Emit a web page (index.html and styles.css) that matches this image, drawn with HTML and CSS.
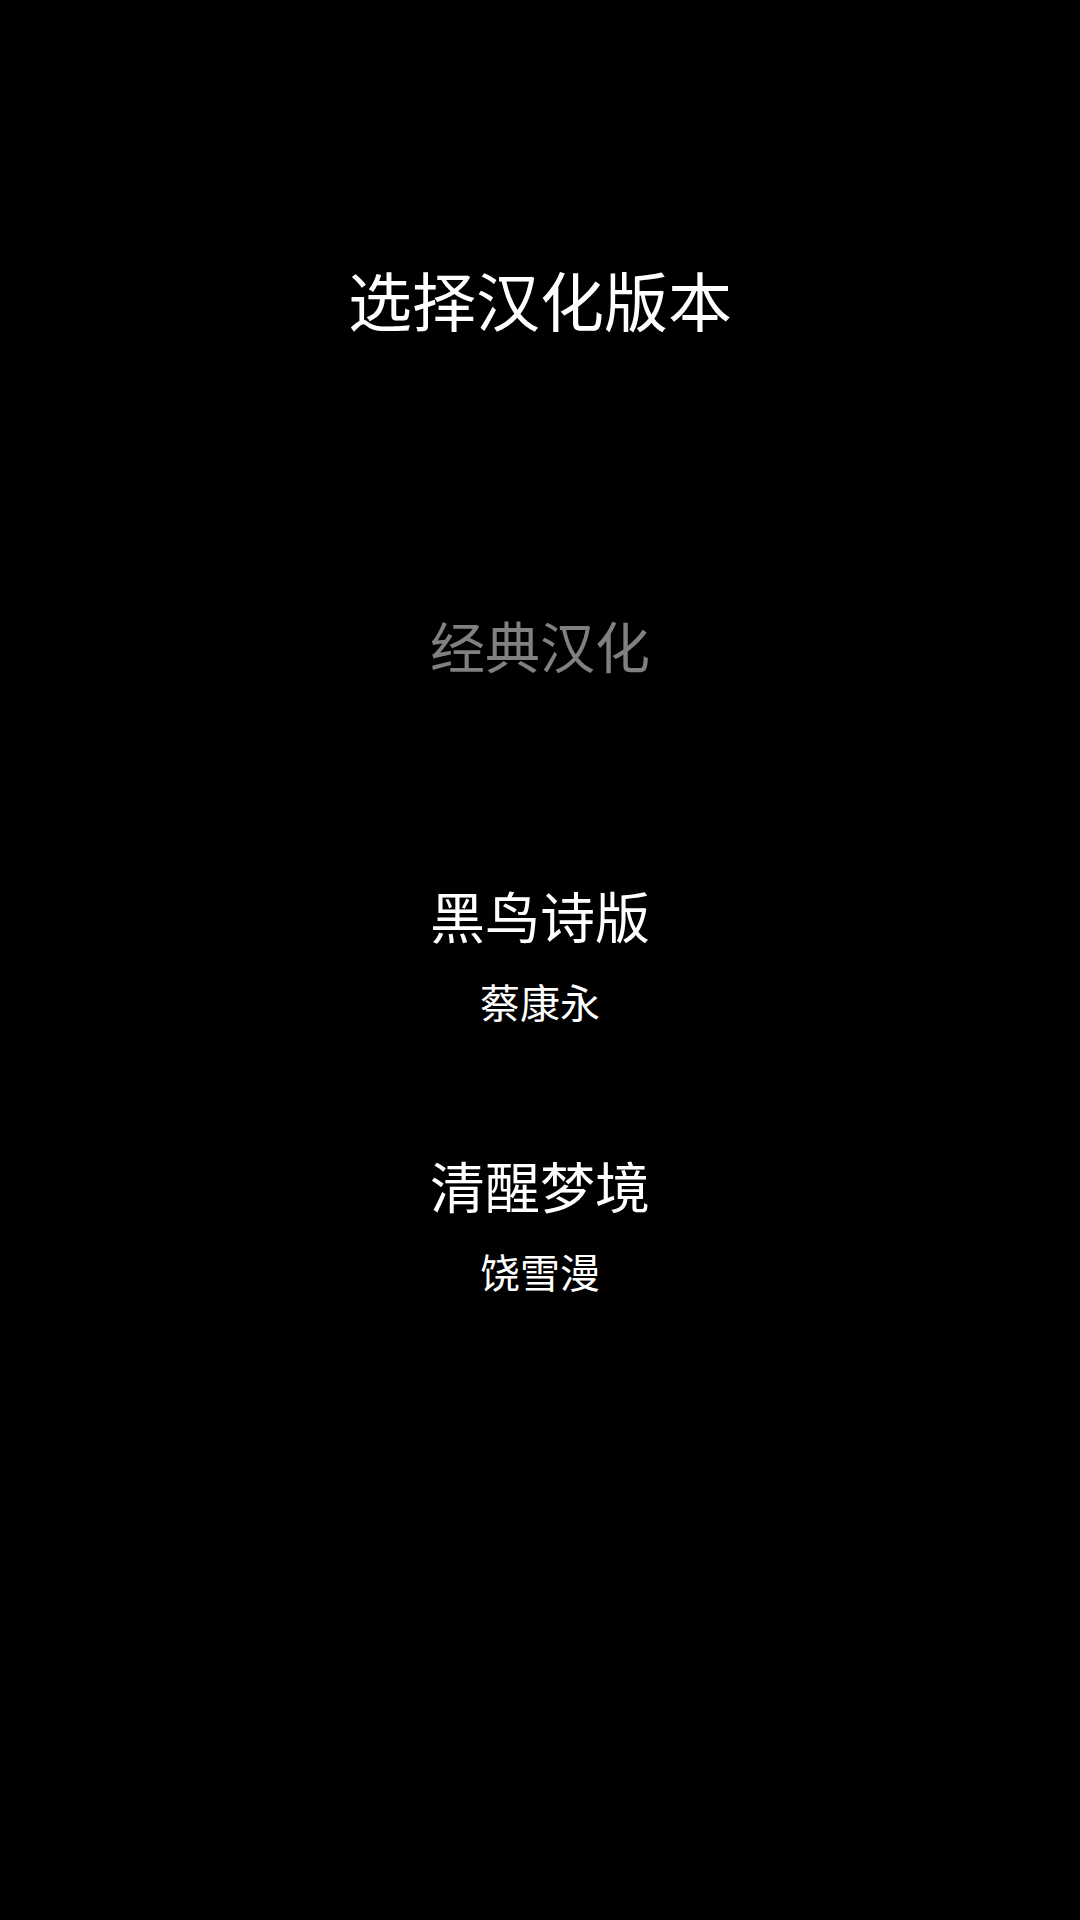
FILE: index.html
```html
<!DOCTYPE html>
<html lang="zh-CN">
<head>
<meta charset="utf-8">
<title>选择汉化版本</title>
<link rel="stylesheet" href="styles.css">
</head>
<body>
<main class="screen">
  <h1 class="title">选择汉化版本</h1>
  <ul class="versions">
    <li class="version version--disabled">
      <div class="version-name">经典汉化</div>
    </li>
    <li class="version">
      <div class="version-name">黑鸟诗版</div>
      <div class="version-author">蔡康永</div>
    </li>
    <li class="version">
      <div class="version-name">清醒梦境</div>
      <div class="version-author">饶雪漫</div>
    </li>
  </ul>
</main>
</body>
</html>
```

FILE: styles.css
```css
html, body {
  margin: 0;
  padding: 0;
  background: #000;
}

body {
  width: 1080px;
  height: 1920px;
  overflow: hidden;
  font-family: "Noto Sans CJK SC", "Noto Sans", sans-serif;
  color: #fff;
}

.screen {
  display: flex;
  flex-direction: column;
  align-items: center;
  padding-top: 266px;
}

.title {
  margin: 0;
  font-size: 64px;
  line-height: 64px;
  font-weight: 400;
  color: #fff;
}

.versions {
  list-style: none;
  margin: 287px 0 0;
  padding: 0;
  display: flex;
  flex-direction: column;
  align-items: center;
}

.version {
  height: 270px;
  display: flex;
  flex-direction: column;
  align-items: center;
  gap: 39px;
}

.version-name {
  font-size: 55px;
  line-height: 55px;
  color: #fff;
}

.version--disabled .version-name {
  color: #808080;
}

.version-author {
  font-size: 40px;
  line-height: 40px;
  color: #fff;
}
```
